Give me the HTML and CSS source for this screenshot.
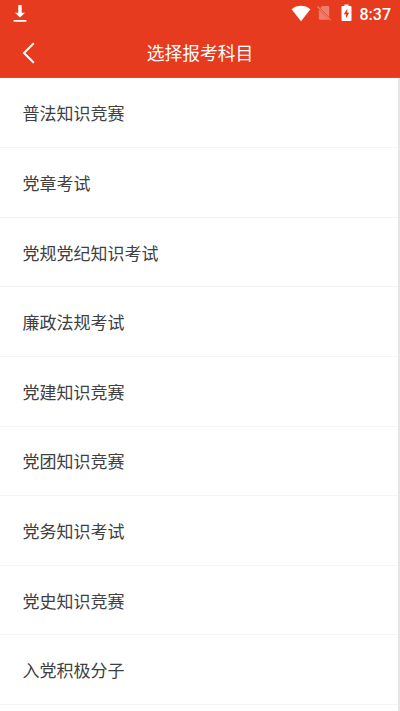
FILE: index.html
```html
<!DOCTYPE html>
<html lang="zh-CN">
<head>
<meta charset="utf-8">
<title>选择报考科目</title>
<link rel="stylesheet" href="styles.css">
</head>
<body>
<header class="header">
  <div class="status">
    <svg class="download" width="14" height="18" viewBox="0 0 14 18"><path d="M5.300 1h3.400v7.800H12L7 13.600 2 8.800h3.300zM.6 16h12.800v1.800H.6z"/></svg>
    <div class="indicators">
      <svg class="wifi" width="20" height="17" viewBox="0 0 20 17"><path d="M.6 4.200C6-.4 14-.4 19.400 4.200L10 16.200z"/></svg>
      <svg class="sim" width="14" height="16" viewBox="0 0 14 16"><path d="M5.200 1H11q1.200 0 1.200 1.200V12L3.300 3zM1.800 4.500 12 14.800H2.800q-1 0-1-1z"/><path class="slash" d="M.5 1.500 13.500 15"/></svg>
      <svg class="battery" width="11" height="18" viewBox="0 0 11 18"><path fill-rule="evenodd" d="M3.500.5h4V2H9.500q1 0 1 1v13q0 1-1 1h-8q-1 0-1-1V3q0-1 1-1h2zM6.300 4.800 2.800 10.200H5v4L8.300 8.700H6.300z"/></svg>
      <span class="time">8:37</span>
    </div>
  </div>
  <div class="titlebar">
    <svg class="back" width="14" height="22" viewBox="0 0 14 22"><path d="M11.800 1.300 2 11l9.800 9.700"/></svg>
    <h1 class="title">选择报考科目</h1>
  </div>
</header>
<main class="content">
  <ul class="list">
    <li class="item">普法知识竞赛</li>
    <li class="item">党章考试</li>
    <li class="item">党规党纪知识考试</li>
    <li class="item">廉政法规考试</li>
    <li class="item">党建知识竞赛</li>
    <li class="item">党团知识竞赛</li>
    <li class="item">党务知识考试</li>
    <li class="item">党史知识竞赛</li>
    <li class="item">入党积极分子</li>
  </ul>
  <div class="scrollbar"></div>
</main>
</body>
</html>
```
FILE: styles.css
```css
* {
  box-sizing: border-box;
}

body {
  margin: 0;
  height: 711px;
  display: flex;
  flex-direction: column;
  overflow: hidden;
  background: #fff;
  color: #404040;
  font-family: Roboto, "Noto Sans CJK SC", sans-serif;
}

.header {
  flex: none;
  height: 78px;
  background: #e63b1f;
  border-bottom: 1px solid #dc4a35;
  color: #fff;
}

.status {
  display: flex;
  justify-content: space-between;
  height: 28px;
  padding: 4px 9px 0 13px;
}

.indicators {
  display: flex;
  align-items: flex-start;
}

svg {
  display: block;
  fill: #fff;
}

.wifi {
  margin-top: 1px;
}

.sim {
  margin: 1px 0 0 6px;
  opacity: 0.35;
}

.slash {
  fill: none;
  stroke: #fff;
  stroke-width: 1.2;
}

.battery {
  margin-left: 10px;
}

.time {
  margin-left: 8px;
  font-size: 16px;
  font-weight: 500;
  line-height: 21px;
}

.titlebar {
  display: grid;
  grid-template-columns: 60px 1fr 60px;
  align-items: center;
  height: 50px;
}

.back {
  margin-left: 22px;
  fill: none;
  stroke: #fff;
  stroke-width: 2;
}

.title {
  margin: 0;
  padding-top: 2px;
  font-size: 17.8px;
  font-weight: 400;
  line-height: 26px;
  text-align: center;
}

.content {
  flex: 1;
  display: flex;
  min-height: 0;
}

.list {
  flex: 1;
  margin: 0;
  padding: 0.600px 0 0;
  list-style: none;
}

.item {
  display: flex;
  align-items: center;
  height: 69.6px;
  padding-left: 22.4px;
  border-bottom: 1px solid #f4f4f4;
  font-size: 17px;
}

.scrollbar {
  width: 2px;
  background: #e6e6e6;
}
```
